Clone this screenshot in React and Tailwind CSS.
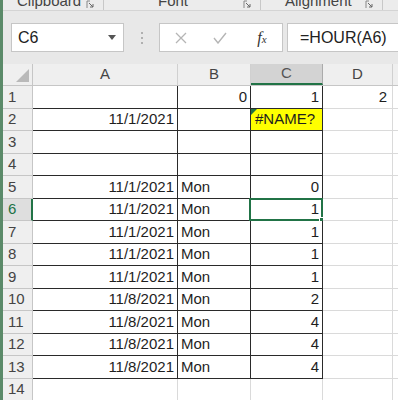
import React from "react";

const rows = [
  { n: 1, a: "", b: "0", c: "1", d: "2" },
  { n: 2, a: "11/1/2021", b: "", c: "#NAME?", d: "" },
  { n: 3, a: "", b: "", c: "", d: "" },
  { n: 4, a: "", b: "", c: "", d: "" },
  { n: 5, a: "11/1/2021", b: "Mon", c: "0", d: "" },
  { n: 6, a: "11/1/2021", b: "Mon", c: "1", d: "" },
  { n: 7, a: "11/1/2021", b: "Mon", c: "1", d: "" },
  { n: 8, a: "11/1/2021", b: "Mon", c: "1", d: "" },
  { n: 9, a: "11/1/2021", b: "Mon", c: "1", d: "" },
  { n: 10, a: "11/8/2021", b: "Mon", c: "2", d: "" },
  { n: 11, a: "11/8/2021", b: "Mon", c: "4", d: "" },
  { n: 12, a: "11/8/2021", b: "Mon", c: "4", d: "" },
  { n: 13, a: "11/8/2021", b: "Mon", c: "4", d: "" },
  { n: 14, a: "", b: "", c: "", d: "" },
];

function Launcher() {
  return (
    <svg width="9" height="9" viewBox="0 0 9 9" className="mt-[-2px]">
      <path d="M1 1h3M1 1v7" stroke="#888" strokeWidth="1" fill="none" />
      <path d="M3 3l4 4M7 4v3H4" stroke="#666" strokeWidth="1" fill="none" />
    </svg>
  );
}

function RibbonLabels() {
  return (
    <div className="h-[11px] overflow-hidden flex items-end border-b border-[#d4d4d4] bg-[#ececec] text-[15px] text-[#444] leading-none">
      <div className="w-[101px] flex items-center justify-between pl-[14px] pr-[8px] h-full border-r border-[#c8c8c8]">
        <span className="mt-[-9px]">Clipboard</span>
        <Launcher />
      </div>
      <div className="w-[157px] flex items-center justify-between pl-[54px] pr-[8px] h-full border-r border-[#c8c8c8]">
        <span className="mt-[-9px]">Font</span>
        <Launcher />
      </div>
      <div className="w-[122px] flex items-center justify-between pl-[24px] pr-[8px] h-full border-r border-[#c8c8c8]">
        <span className="mt-[-9px]">Alignment</span>
        <Launcher />
      </div>
    </div>
  );
}

function FormulaBar() {
  return (
    <div className="h-[53px] bg-[#e8e8e8] flex items-start pt-[12px] pl-[8px] text-[16px] text-[#222]">
      <div className="w-[113px] h-[29px] bg-white border border-[#c6c6c6] flex items-center justify-between pl-[6px] pr-[7px]">
        <span>C6</span>
        <svg width="8" height="5" viewBox="0 0 8 5">
          <path d="M0 0h8L4 5z" fill="#555" />
        </svg>
      </div>
      <div className="w-[35px] h-[29px] flex flex-col items-center justify-center gap-[3px]">
        <span className="w-[2px] h-[2px] bg-[#b0b0b0]" />
        <span className="w-[2px] h-[2px] bg-[#b0b0b0]" />
        <span className="w-[2px] h-[2px] bg-[#b0b0b0]" />
      </div>
      <div className="w-[124px] h-[29px] bg-white border border-[#c6c6c6] flex items-center">
        <div className="w-[42px] flex justify-center">
          <svg width="12" height="12" viewBox="0 0 12 12">
            <path d="M1 1l10 10M11 1L1 11" stroke="#b5b5b5" strokeWidth="1.3" />
          </svg>
        </div>
        <div className="w-[36px] flex justify-center">
          <svg width="14" height="12" viewBox="0 0 14 12">
            <path d="M1 6l4 5L13 1" stroke="#b5b5b5" strokeWidth="1.4" fill="none" />
          </svg>
        </div>
        <div className="flex-1 flex justify-center pl-[4px]">
          <span className="italic text-[#333] text-[16px] [font-family:'Liberation_Serif',serif]">
            f<span className="text-[11px]">x</span>
          </span>
        </div>
      </div>
      <div className="ml-[4px] flex-1 h-[29px] bg-white border border-[#c6c6c6] border-r-0 flex items-center pl-[12px]">
        =HOUR(A6)
      </div>
    </div>
  );
}

const cols = [
  { key: "a", label: "A", w: "w-[145px]", align: "justify-end pr-[3px]" },
  { key: "b", label: "B", w: "w-[73px]", align: "justify-start pl-[3px]" },
  { key: "c", label: "C", w: "w-[72px]", align: "justify-end pr-[3px]" },
  { key: "d", label: "D", w: "w-[70px]", align: "justify-end pr-[5px]" },
];

function Cell({ col, row }) {
  const boxed = col.key !== "d" && row.n <= 13;
  const isB1 = col.key === "b" && row.n === 1;
  const align = isB1 ? "justify-end pr-[3px]" : col.align;
  const err = col.key === "c" && row.n === 2;
  const sel = col.key === "c" && row.n === 6;
  return (
    <div
      className={`relative ${col.w} shrink-0 h-full flex items-center ${align} border-r border-b ${
        boxed ? "border-[#2a2a2a]" : "border-[#dadada]"
      } ${err ? "bg-[#ffff00]" : "bg-white"}`}
    >
      {err && (
        <span className="absolute top-0 left-0 w-0 h-0 border-t-[6px] border-r-[6px] border-t-[#217346] border-r-transparent" />
      )}
      <span className={err ? "w-full text-center" : ""}>{row[col.key]}</span>
      {sel && (
        <>
          <span className="absolute -top-px -left-[2px] -right-px -bottom-px border-2 border-[#217346]" />
          <span className="absolute -right-[4px] -bottom-[4px] w-[7px] h-[7px] bg-[#217346] border border-white" />
        </>
      )}
    </div>
  );
}

export default function App() {
  return (
    <div className="w-[398px] h-[400px] overflow-hidden bg-white border-l-[3px] border-[#5b8a69] [font-family:'Liberation_Sans',Arial,sans-serif]">
      <RibbonLabels />
      <FormulaBar />
      <div className="text-[15px] text-[#1e1e1e]">
        <div className="h-[22px] flex bg-[#efefef] text-[#444] border-b border-[#c6c6c6]">
          <div className="w-[30px] shrink-0 relative border-r border-[#c6c6c6]">
            <span className="absolute right-[3px] bottom-[3px] w-0 h-0 border-b-[13px] border-l-[13px] border-b-[#b9b9b9] border-l-transparent" />
          </div>
          {cols.map((c) => (
            <div
              key={c.key}
              className={`${c.w} shrink-0 flex items-center justify-center border-r ${
                c.key === "c"
                  ? "bg-[#d3d3d3] border-[#ababab] border-b-2 border-b-[#217346] text-[#555]"
                  : "border-[#d0d0d0]"
              }`}
            >
              {c.label}
            </div>
          ))}
          <div className="flex-1" />
        </div>
        {rows.map((r) => (
          <div key={r.n} className="h-[22.5px] flex">
            <div
              className={`w-[30px] shrink-0 flex items-center pl-[5px] border-b ${
                r.n === 6
                  ? "bg-[#dedede] text-[#217346] border-r-2 border-r-[#217346] border-b-[#c6c6c6]"
                  : "bg-[#efefef] text-[#444] border-r border-[#c6c6c6]"
              }`}
            >
              {r.n}
            </div>
            {cols.map((c) => (
              <Cell key={c.key} col={c} row={r} />
            ))}
            <div className="flex-1 border-b border-[#dadada]" />
          </div>
        ))}
      </div>
    </div>
  );
}
